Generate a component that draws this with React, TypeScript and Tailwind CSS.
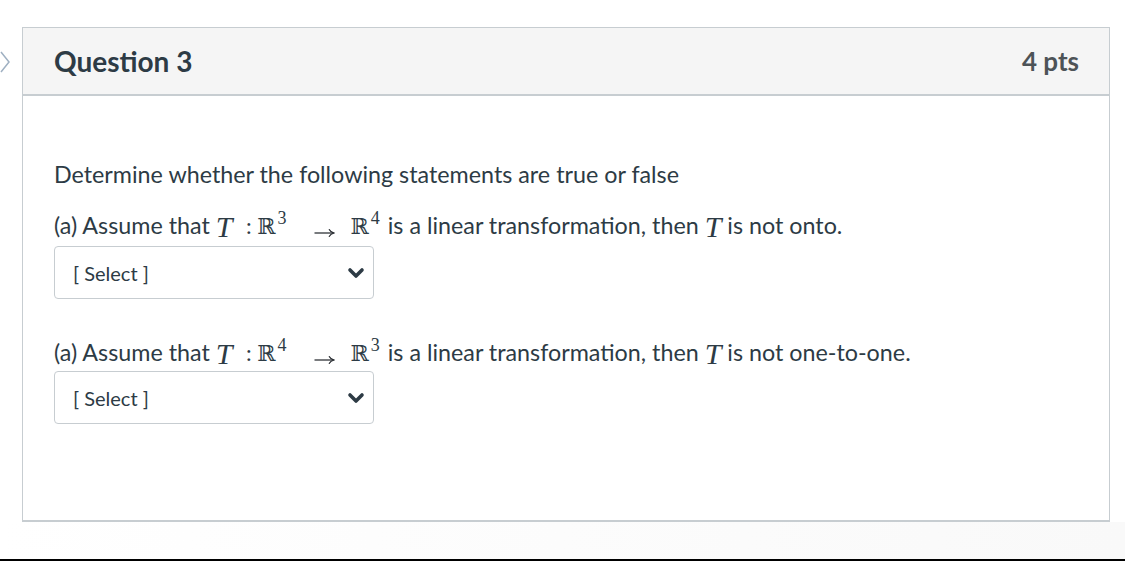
import { ChevronDown } from 'lucide-react';

const textFont = { fontFamily: 'Lato, "Open Sans", sans-serif' };
const serif = { fontFamily: '"Liberation Serif", "DejaVu Serif", serif' };

function Real({ exp }: { exp: string }) {
    return (
        <span className="inline-flex items-baseline">
            <span className="text-[22px]" style={{ fontFamily: '"DejaVu Serif", serif' }}>ℝ</span>
            <span className="relative -top-[10px] text-[18px] ml-[2px]" style={serif}>{exp}</span>
        </span>
    );
}

function Tee() {
    return (
        <span className="italic text-[30px] font-medium relative top-[3px]" style={serif}>T</span>
    );
}

function Arrow() {
    return (
        <svg className="ml-[28px] mr-[15px] self-center relative top-[7px]" width="21" height="10" viewBox="0 0 21 10">
            <path d="M0.5 5 H19.5" stroke="#1f2328" strokeWidth="1.2" />
            <path d="M15 1.2 Q16.5 4 20 5 Q16.5 6 15 8.8" fill="none" stroke="#1f2328" strokeWidth="1.2" />
        </svg>
    );
}

function Mapping({ from, to }: { from: string; to: string }) {
    return (
        <span className="inline-flex items-baseline mr-[8px]" style={serif}>
            <Tee />
            <span className="text-[24px] ml-[13px] mr-[5px]">:</span>
            <Real exp={from} />
            <Arrow />
            <Real exp={to} />
        </span>
    );
}

function SelectBox() {
    return (
        <div className="w-[320px] h-[53px] border border-[#c7cdd1] rounded-[4px] flex items-center justify-between pl-[18px] pr-[5px] bg-white">
            <span className="text-[20px] text-[#2d3b45]">[ Select ]</span>
            <ChevronDown size={24} strokeWidth={3.6} className="text-[#2d3b45]" />
        </div>
    );
}

export default function App() {
    return (
        <div className="relative h-[561px] flex flex-col bg-white overflow-hidden" style={textFont}>
            {/* side toggle */}
            <svg className="absolute left-0 top-[50px]" width="12" height="24" viewBox="0 0 12 24">
                <path d="M1 2 L9 12 L1 22" fill="none" stroke="#9fb0c2" strokeWidth="1.5" />
            </svg>

            <div className="ml-[22px] mt-[27px] w-[1088px] h-[495px] border border-[#c7cdd1] border-b-2 flex flex-col">
                <div className="h-[68px] bg-[#f5f5f5] border-b-2 border-[#c7cdd1] flex items-center justify-between pl-[31px] pr-[30px]">
                    <h2 className="text-[28px] font-bold text-[#2d3b45]">Question 3</h2>
                    <span className="text-[26px] font-bold text-[#4d5357]">4 pts</span>
                </div>

                <div className="pl-[31px] pt-[63px] text-[23.3px] text-[#2d3b45]">
                    <p className="leading-[30px] h-[30px]">Determine whether the following statements are true or false</p>

                    <p className="leading-[30px] h-[30px] mt-[20px] flex items-baseline whitespace-pre">
                        (a) Assume that <Mapping from="3" to="4" />is a linear transformation, then <Tee /> is not onto.
                    </p>
                    <div className="mt-[7px]">
                        <SelectBox />
                    </div>

                    <p className="leading-[30px] h-[30px] mt-[37px] flex items-baseline whitespace-pre">
                        (a) Assume that <Mapping from="4" to="3" />is a linear transformation, then <Tee /> is not one-to-one.
                    </p>
                    <div className="mt-[5px]">
                        <SelectBox />
                    </div>
                </div>
            </div>

            <div className="flex-1 bg-gradient-to-r from-white to-[#f9f9f9]" />
            <div className="h-[2px] bg-black" />
        </div>
    );
}
